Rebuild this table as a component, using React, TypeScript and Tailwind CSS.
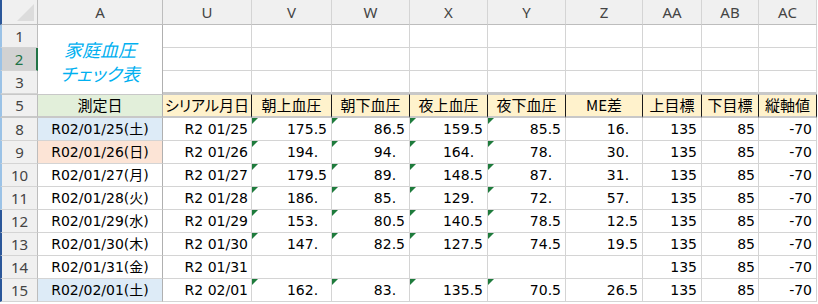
import React from "react";

const COLS = "grid-cols-[38px_125px_89px_80px_78px_78px_78px_77px_59px_57px_58px]";
const NUM = "font-['DejaVu_Sans','Noto_Sans_CJK_JP',sans-serif] text-[14px]";
const JP = "font-['Noto_Sans_CJK_JP',sans-serif] text-[15px] [font-feature-settings:'palt']";
const HDR = "font-['Noto_Sans','Liberation_Sans',sans-serif] text-[15px] text-[#444]";

type Row = {
  n: number;
  date: string;
  serial: string;
  v: string[];
  bg?: string;
  dark?: boolean;
};

const rows: Row[] = [
  { n: 8, date: "R02/01/25(土)", serial: "R2 01/25", v: ["175.5", "86.5", "159.5", "85.5", "16."], bg: "bg-[#ddebf7]" },
  { n: 9, date: "R02/01/26(日)", serial: "R2 01/26", v: ["194.", "94.", "164.", "78.", "30."], bg: "bg-[#fce4d6]" },
  { n: 10, date: "R02/01/27(月)", serial: "R2 01/27", v: ["179.5", "89.", "148.5", "87.", "31."] },
  { n: 11, date: "R02/01/28(火)", serial: "R2 01/28", v: ["186.", "85.", "129.", "72.", "57."] },
  { n: 12, date: "R02/01/29(水)", serial: "R2 01/29", v: ["153.", "80.5", "140.5", "78.5", "12.5"], dark: true },
  { n: 13, date: "R02/01/30(木)", serial: "R2 01/30", v: ["147.", "82.5", "127.5", "74.5", "19.5"], dark: true },
  { n: 14, date: "R02/01/31(金)", serial: "R2 01/31", v: ["", "", "", "", ""], dark: true },
  { n: 15, date: "R02/02/01(土)", serial: "R2 02/01", v: ["162.", "83.", "135.5", "70.5", "26.5"], bg: "bg-[#ddebf7]", dark: true },
];

function Tri() {
  return (
    <span className="absolute left-0 top-0 h-0 w-0 border-t-[6px] border-r-[6px] border-t-[#1e7b3c] border-r-transparent" />
  );
}

function NumVal({ s }: { s: string }) {
  if (!s) return null;
  if (s.endsWith(".")) {
    return (
      <span>
        {s}
        <span className="invisible">0</span>
      </span>
    );
  }
  return <span>{s}</span>;
}

function RowHead({ children, dark, sel }: { children: React.ReactNode; dark?: boolean; sel?: boolean }) {
  return (
    <div
      className={`flex items-center justify-center border-l-2 border-b border-b-[#d4d4d4] ${
        dark ? "border-l-[#2b579a]" : "border-l-[#9bc2e6]"
      } ${
        sel
          ? "bg-[#d2d2d2] border-r-2 border-r-[#217346] text-[#217346]"
          : "bg-[#f0f0f0] border-r border-r-[#bdbdbd] text-[#444]"
      } font-['Noto_Sans','Liberation_Sans',sans-serif] text-[15px]`}
    >
      {children}
    </div>
  );
}

export default function App() {
  const colLetters = ["A", "U", "V", "W", "X", "Y", "Z", "AA", "AB", "AC"];
  const heads = ["シリアル月日", "朝上血圧", "朝下血圧", "夜上血圧", "夜下血圧", "ME差", "上目標", "下目標", "縦軸値"];
  return (
    <div className="w-[818px] h-[304px] bg-white overflow-hidden">
      <div className={`grid ${COLS} grid-rows-[25px_23px_23px_23px_24px_repeat(8,23px)] w-[817px]`}>
        {/* column header */}
        <div className="relative bg-[#f0f0f0] border-l-2 border-l-[#2b579a] border-r border-b border-[#bdbdbd]">
          <span className="absolute right-[3px] bottom-[3px] h-0 w-0 border-l-[17px] border-t-[17px] border-l-transparent border-t-transparent border-b-[0px] border-r-[0px]" />
          <span className="absolute right-[3px] bottom-[3px] w-0 h-0 border-b-[17px] border-l-[17px] border-b-[#dcdcdc] border-l-transparent" />
        </div>
        {colLetters.map((c, i) => (
          <div
            key={c}
            className={`flex items-center justify-center bg-[#f0f0f0] border-b border-b-[#bdbdbd] border-r ${
              i === 0 ? "border-r-[#bdbdbd]" : "border-r-[#d4d4d4]"
            } ${HDR}`}
          >
            {c}
          </div>
        ))}

        {/* row 1 */}
        <RowHead>1</RowHead>
        <div className="row-span-3 flex flex-col items-center justify-center pt-[3px] border-r border-r-[#b0b0b0] text-[#00b0f0] italic font-['Noto_Sans_CJK_JP',sans-serif] text-[18px] leading-[24px]">
          <span className="[font-feature-settings:'palt']">家庭血圧</span>
          <span className="[font-feature-settings:'palt']">チェック表</span>
        </div>
        {Array.from({ length: 9 }).map((_, i) => (
          <div key={"r1" + i} className="border-r border-b border-[#d4d4d4]" />
        ))}
        <RowHead sel>2</RowHead>
        {Array.from({ length: 9 }).map((_, i) => (
          <div key={"r2" + i} className="border-r border-b border-[#d4d4d4]" />
        ))}
        <RowHead>3</RowHead>
        {Array.from({ length: 9 }).map((_, i) => (
          <div key={"r3" + i} className="border-r border-b-2 border-r-[#d4d4d4] border-b-[#c8c8c8]" />
        ))}

        {/* row 5 */}
        <div className="flex items-center justify-center bg-[#f0f0f0] border-l-2 border-l-[#9bc2e6] border-r border-r-[#bdbdbd] border-t border-t-[#c8c8c8] border-b-2 border-b-[#c8c8c8] font-['Noto_Sans','Liberation_Sans',sans-serif] text-[15px] text-[#444]">
          5
        </div>
        <div className={`flex items-center justify-center bg-[#e2efda] border-t border-t-[#c8c8c8] border-r border-r-[#b0b0b0] border-b-2 border-b-[#c8c8c8] text-black ${JP}`}>
          測定日
        </div>
        {heads.map((h, i) => (
          <div
            key={h}
            className={`flex items-center justify-center bg-[#fff2cc] border-t border-t-[#c8c8c8] border-b-2 border-b-[#c8c8c8] border-r border-r-[#1a1a1a] text-black ${JP} ${
              i === 0 ? "" : ""
            }`}
          >
            {h}
          </div>
        ))}

        {/* data rows */}
        {rows.map((r) => (
          <React.Fragment key={r.n}>
            <RowHead dark={r.dark}>{r.n}</RowHead>
            <div
              className={`flex items-center justify-center border-r border-r-[#b0b0b0] border-b border-b-[#d4d4d4] ${r.bg ?? ""} text-black ${NUM}`}
            >
              {r.date}
            </div>
            <div className={`flex items-center justify-end pr-[3px] border-r border-b border-[#d4d4d4] text-black ${NUM}`}>
              {r.serial}
            </div>
            {r.v.map((val, i) => (
              <div
                key={i}
                className={`relative flex items-center justify-end pr-[4px] border-r border-b border-[#d4d4d4] text-black ${NUM}`}
              >
                {val && i < 4 ? <Tri /> : null}
                <NumVal s={val} />
              </div>
            ))}
            <div className={`flex items-center justify-end pr-[4px] border-r border-b border-[#d4d4d4] text-black ${NUM}`}>135</div>
            <div className={`flex items-center justify-end pr-[3px] border-r border-b border-[#d4d4d4] text-black ${NUM}`}>85</div>
            <div className={`flex items-center justify-end pr-[4px] border-r border-b border-[#d4d4d4] text-black ${NUM}`}>-70</div>
          </React.Fragment>
        ))}
      </div>
    </div>
  );
}
